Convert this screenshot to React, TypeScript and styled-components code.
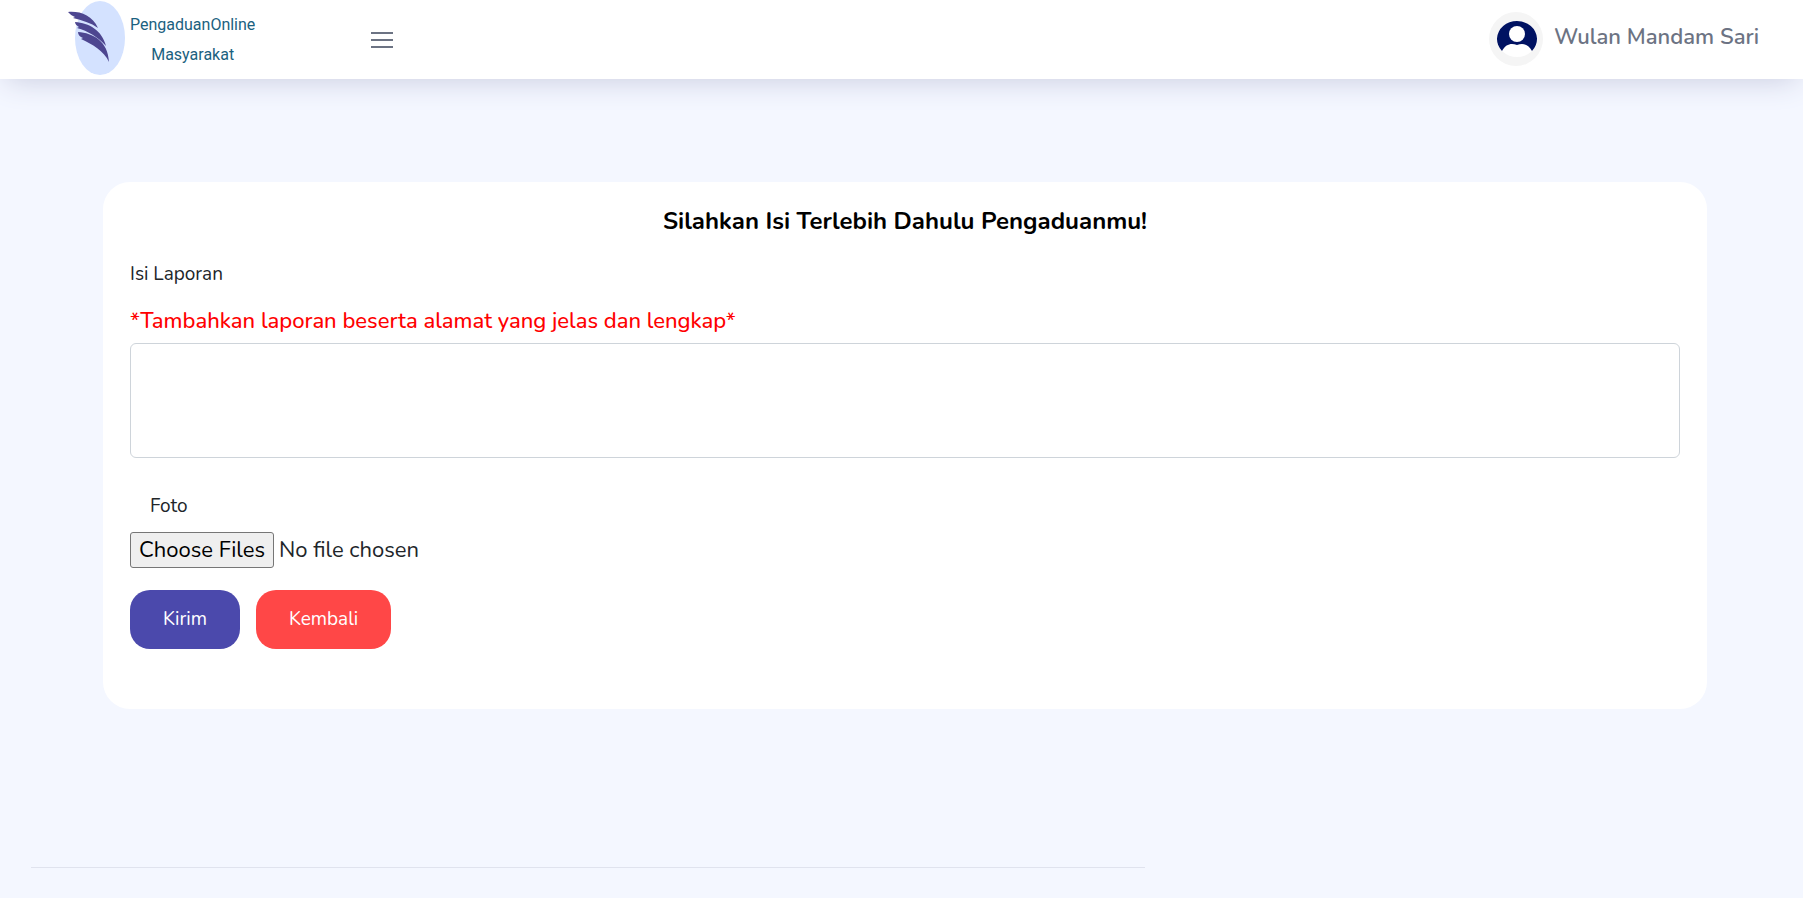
import React, { useState } from "react";
import styled, { createGlobalStyle } from "styled-components";

const GlobalStyle = createGlobalStyle`
  *, *::before, *::after { box-sizing: border-box; }
  body {
    margin: 0;
    background: #f4f7ff;
    color: #212529;
    font-family: Nunito, Lato, "Open Sans", sans-serif;
    font-size: 20px;
    line-height: 30px;
  }
`;

const Header = styled.header`
  display: flex;
  align-items: center;
  height: 79px;
  padding: 0 44px 0 66px;
  background: #ffffff;
  box-shadow: 0 7px 30px -6px #c8cbdf;
`;

const Brand = styled.a`
  display: flex;
  align-items: center;
  gap: 4px;
  width: 304px;
  padding-bottom: 3px;
  color: #1b6180;
  text-decoration: none;
`;

const BrandName = styled.span`
  padding-top: 4px;
  font-family: Roboto, sans-serif;
  font-size: 16px;
  line-height: 30px;
  text-align: center;
`;

const MenuButton = styled.button`
  display: flex;
  padding: 0;
  border: 0;
  background: none;
  color: #6c7383;
  cursor: pointer;
`;

const Profile = styled.a`
  display: flex;
  align-items: center;
  gap: 11px;
  margin-left: auto;
  padding-bottom: 2px;
  color: #6c7383;
  text-decoration: none;
`;

const ProfileName = styled.span`
  padding-bottom: 4px;
  font-size: 22px;
  font-weight: 600;
`;

const Content = styled.main`
  padding: 103px 96px 0 103px;
`;

const Card = styled.section`
  padding: 24px 27px 60px;
  border-radius: 27px;
  background: #ffffff;
`;

const Title = styled.h1`
  margin: 0 0 25px;
  color: #000000;
  font-size: 24px;
  font-weight: 700;
  line-height: 30px;
  text-align: center;
`;

const Form = styled.form`
  display: flex;
  flex-direction: column;
  align-items: flex-start;
`;

const Label = styled.label<{ $inset?: boolean }>`
  padding-left: ${(p) => (p.$inset ? 20 : 0)}px;
  font-size: 19px;
  line-height: 26px;
`;

const Hint = styled.p`
  margin: 20px 0 8px;
  color: #ff0000;
  font-size: 22px;
  font-weight: 500;
  line-height: 28px;
`;

const ReportBox = styled.textarea`
  width: 100%;
  height: 115px;
  margin-bottom: 35px;
  padding: 8px 14px;
  border: 1px solid #ced4da;
  border-radius: 6px;
  font: inherit;
  resize: none;
`;

const FileInput = styled.input`
  margin: 13px 0 22px;
  font: inherit;
  font-size: 22px;
  line-height: 30px;

  &::file-selector-button {
    margin: 0 5px 0 0;
    padding: 2px 8px;
    border: 1px solid #767676;
    border-radius: 3px;
    background: #efefef;
    color: #000000;
    font: inherit;
  }
`;

const Actions = styled.div`
  display: flex;
  gap: 16px;
`;

const ActionButton = styled.button<{ $tone: string }>`
  padding: 16px 33px;
  border: 0;
  border-radius: 20px;
  background: ${(p) => p.$tone};
  color: #ffffff;
  font: inherit;
  font-size: 19px;
  line-height: 27px;
  cursor: pointer;
`;

const Footer = styled.footer`
  padding: 158px 31px 30px;
`;

const Divider = styled.hr`
  width: 64%;
  margin: 0;
  border: 0;
  border-top: 1px solid #e0e3ee;
`;

const Logo = () => (
  <svg width="60" height="76" viewBox="0 0 60 76" aria-hidden="true">
    <ellipse cx="34" cy="38" rx="25" ry="37" fill="#d4e2ff" />
    <g fill="#4d4690">
      <path d="M2 12C14 11 26 15 32 28C25 23 16 20 7 18L9 17C6 16 4 14 2 12Z" />
      <path d="M9 22C23 23 36 30 40 46C32 37 22 31 11 28L13 27C11 26 9 24 9 22Z" />
      <path d="M12 32C27 33 42 41 43 62C38 51 26 44 15 39L17 38C14 37 12 35 12 32Z" />
    </g>
  </svg>
);

const Avatar = () => (
  <svg width="54" height="54" viewBox="0 0 54 54" aria-hidden="true">
    <circle cx="27" cy="27" r="27" fill="#f5f5f5" />
    <ellipse cx="28" cy="27" rx="20" ry="18" fill="#ffffff" />
    <path d="M13 39A20 18 0 1 1 43 39C39 32 34 31 28 33C22 31 17 32 13 39Z" fill="#001262" />
    <circle cx="28" cy="22" r="8" fill="#ffffff" />
  </svg>
);

export default function App() {
  const [report, setReport] = useState("");
  return (
    <>
      <GlobalStyle />
      <Header>
        <Brand href="#">
          <Logo />
          <BrandName>
            PengaduanOnline
            <br />
            Masyarakat
          </BrandName>
        </Brand>
        <MenuButton type="button" aria-label="Menu">
          <svg width="24" height="18" viewBox="0 0 24 18" stroke="currentColor" strokeWidth="2">
            <path d="M1 2H23M1 9H23M1 16H23" />
          </svg>
        </MenuButton>
        <Profile href="#">
          <Avatar />
          <ProfileName>Wulan Mandam Sari</ProfileName>
        </Profile>
      </Header>
      <Content>
        <Card>
          <Title>Silahkan Isi Terlebih Dahulu Pengaduanmu!</Title>
          <Form onSubmit={(e) => e.preventDefault()}>
            <Label htmlFor="report">Isi Laporan</Label>
            <Hint id="report-hint">*Tambahkan laporan beserta alamat yang jelas dan lengkap*</Hint>
            <ReportBox
              id="report"
              aria-describedby="report-hint"
              value={report}
              onChange={(e) => setReport(e.target.value)}
            />
            <Label htmlFor="photo" $inset>
              Foto
            </Label>
            <FileInput id="photo" type="file" multiple />
            <Actions>
              <ActionButton type="submit" $tone="#4b49ac">
                Kirim
              </ActionButton>
              <ActionButton type="button" $tone="#ff4747">
                Kembali
              </ActionButton>
            </Actions>
          </Form>
        </Card>
      </Content>
      <Footer>
        <Divider />
      </Footer>
    </>
  );
}
